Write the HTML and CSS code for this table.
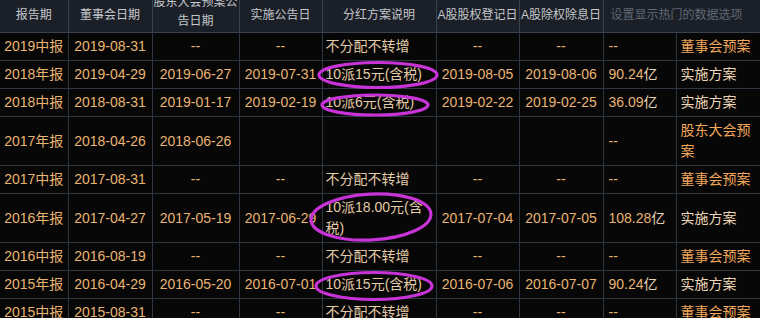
FILE: index.html
```html
<!DOCTYPE html>
<html lang="zh-CN">
<head>
<meta charset="utf-8">
<title>分红方案</title>
<link rel="stylesheet" href="styles.css">
</head>
<body>
<div class="page">
<table class="grid">
  <colgroup>
    <col class="c1"><col class="c2"><col class="c3"><col class="c4"><col class="c5"><col class="c6"><col class="c7"><col class="c8"><col class="c9">
  </colgroup>
  <thead>
    <tr>
      <th><div class="hc">报告期</div></th>
      <th><div class="hc">董事会日期</div></th>
      <th><div class="hc wrap"><span>股东大会预案公告日期</span></div></th>
      <th><div class="hc">实施公告日</div></th>
      <th><div class="hc">分红方案说明</div></th>
      <th><div class="hc">A股股权登记日</div></th>
      <th><div class="hc">A股除权除息日</div></th>
      <th colspan="2" class="dim"><div class="hc left">设置显示热门的数据选项</div></th>
    </tr>
  </thead>
  <tbody>
    <tr><td class="period">2019中报</td><td class="date">2019-08-31</td><td class="date">--</td><td class="date">--</td><td class="plan">不分配不转增</td><td class="date">--</td><td class="date">--</td><td class="amt">--</td><td class="stage board">董事会预案</td></tr>
    <tr><td class="period">2018年报</td><td class="date">2019-04-29</td><td class="date">2019-06-27</td><td class="date">2019-07-31</td><td class="plan">10派15元(含税)</td><td class="date">2019-08-05</td><td class="date">2019-08-06</td><td class="amt">90.24<span class="unit">亿</span></td><td class="stage">实施方案</td></tr>
    <tr><td class="period">2018中报</td><td class="date">2018-08-31</td><td class="date">2019-01-17</td><td class="date">2019-02-19</td><td class="plan">10派6元(含税)</td><td class="date">2019-02-22</td><td class="date">2019-02-25</td><td class="amt">36.09<span class="unit">亿</span></td><td class="stage">实施方案</td></tr>
    <tr><td class="period">2017年报</td><td class="date">2018-04-26</td><td class="date">2018-06-26</td><td class="date"></td><td class="plan"></td><td class="date"></td><td class="date"></td><td class="amt">--</td><td class="stage board">股东大会预案</td></tr>
    <tr><td class="period">2017中报</td><td class="date">2017-08-31</td><td class="date">--</td><td class="date">--</td><td class="plan">不分配不转增</td><td class="date">--</td><td class="date">--</td><td class="amt">--</td><td class="stage board">董事会预案</td></tr>
    <tr><td class="period">2016年报</td><td class="date">2017-04-27</td><td class="date">2017-05-19</td><td class="date">2017-06-29</td><td class="plan">10派18.00元(含税)</td><td class="date">2017-07-04</td><td class="date">2017-07-05</td><td class="amt">108.28<span class="unit">亿</span></td><td class="stage">实施方案</td></tr>
    <tr><td class="period">2016中报</td><td class="date">2016-08-19</td><td class="date">--</td><td class="date">--</td><td class="plan">不分配不转增</td><td class="date">--</td><td class="date">--</td><td class="amt">--</td><td class="stage board">董事会预案</td></tr>
    <tr><td class="period">2015年报</td><td class="date">2016-04-29</td><td class="date">2016-05-20</td><td class="date">2016-07-01</td><td class="plan">10派15元(含税)</td><td class="date">2016-07-06</td><td class="date">2016-07-07</td><td class="amt">90.24<span class="unit">亿</span></td><td class="stage">实施方案</td></tr>
    <tr><td class="period">2015中报</td><td class="date">2015-08-31</td><td class="date">--</td><td class="date">--</td><td class="plan">不分配不转增</td><td class="date">--</td><td class="date">--</td><td class="amt">--</td><td class="stage board">董事会预案</td></tr>
  </tbody>
</table>
<svg class="marks" width="760" height="318" viewBox="0 0 760 318" aria-hidden="true">
  <g fill="none" stroke="#c733d6" stroke-width="3.2">
    <ellipse cx="378" cy="75" rx="59" ry="12.5"/>
    <ellipse cx="375" cy="105" rx="53" ry="10"/>
    <ellipse cx="371" cy="217" rx="60" ry="23" transform="rotate(-3 371 217)"/>
    <ellipse cx="374" cy="286" rx="58" ry="13.5"/>
  </g>
</svg>
</div>
</body>
</html>
```

FILE: styles.css
```css
html, body {
  margin: 0;
  padding: 0;
  background: #070707;
  overflow: hidden;
}

.page {
  position: relative;
  width: 760px;
  height: 318px;
  overflow: hidden;
  font-family: "Liberation Sans", "Noto Sans CJK SC", sans-serif;
}

.grid {
  width: 760px;
  border-collapse: collapse;
  table-layout: fixed;
}

.c1 { width: 68px; }
.c2 { width: 84px; }
.c3 { width: 87px; }
.c4 { width: 83px; }
.c5 { width: 114px; }
.c6 { width: 83px; }
.c7 { width: 84px; }
.c8 { width: 73px; }
.c9 { width: 84px; }

.grid th {
  padding: 0;
  background: #1b1f27;
  color: #c4c8cc;
  font-weight: normal;
  font-size: 12px;
  line-height: 22px;
  border: 1px solid #39434d;
  border-top: none;
}

.grid th:first-child { border-left: none; }

.hc {
  height: 32px;
  box-sizing: border-box;
  padding-bottom: 3px;
  overflow: hidden;
  display: flex;
  align-items: center;
  justify-content: center;
  white-space: nowrap;
}

.hc.wrap {
  white-space: normal;
  word-break: break-all;
  text-align: center;
  line-height: 19px;
  align-items: flex-end;
  padding: 0 1px 1px;
}

.hc.left {
  justify-content: flex-start;
  padding-left: 7px;
}

.grid th.dim {
  color: #5f6975;
  border-right: none;
}

.grid td {
  padding: 3px 0;
  font-size: 14px;
  line-height: 21px;
  color: #e9b472;
  border: 1px solid #2f3842;
  vertical-align: middle;
  overflow: hidden;
  word-break: break-all;
}

.grid td:first-child { border-left: none; }
.grid td:last-child { border-right: none; }

.period, .date {
  text-align: center;
  white-space: nowrap;
}

.plan {
  text-align: left;
  padding-left: 3px !important;
  padding-right: 3px !important;
  color: #e4cba8 !important;
}

.amt {
  text-align: left;
  padding-left: 5px !important;
  white-space: nowrap;
}

.unit {
  color: #e8d2b4;
}

.stage {
  text-align: left;
  padding-left: 4px !important;
  padding-right: 2px !important;
  color: #eed6b6 !important;
}

.stage.board {
  color: #f3a85c !important;
}

.marks {
  position: absolute;
  left: 0;
  top: 0;
  pointer-events: none;
}
```
